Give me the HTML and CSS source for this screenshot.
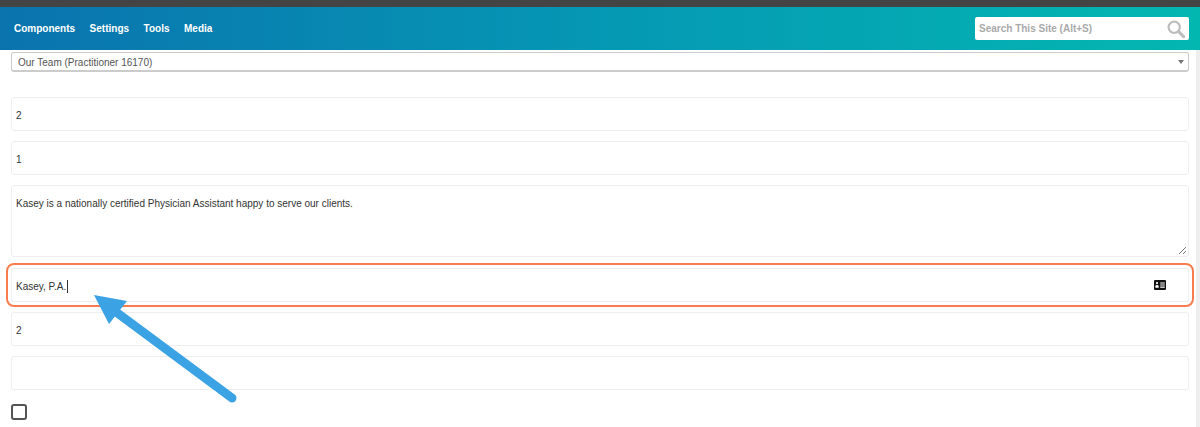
FILE: index.html
```html
<!DOCTYPE html>
<html lang="en">
<head>
    <meta charset="UTF-8">
    <meta name="viewport" content="width=device-width, initial-scale=1.0">
    <title>Edit Practitioner</title>
    <link rel="stylesheet" href="styles.css">
</head>
<body>
    <div class="top-strip"></div>
    <header class="nav-bar">
        <nav class="nav-links">
            <a href="#">Components</a>
            <a href="#">Settings</a>
            <a href="#">Tools</a>
            <a href="#">Media</a>
        </nav>
        <div class="search-box">
            <span class="search-text">Search This Site (Alt+S)</span>
            <svg class="search-icon" viewBox="0 0 18 18" width="18" height="18">
                <circle cx="7.2" cy="7.2" r="5.6" fill="none" stroke="#bdbdbd" stroke-width="2.2"/>
                <path d="M11.4 11.4L16.6 16.6" stroke="#bdbdbd" stroke-width="3" stroke-linecap="round"/>
            </svg>
        </div>
    </header>
    <main class="content">
        <div class="select-box">
            <span>Our Team (Practitioner 16170)</span>
            <span class="select-caret"></span>
        </div>
        <div class="field first-field">2</div>
        <div class="field">1</div>
        <div class="field text-area">
            Kasey is a nationally certified Physician Assistant happy to serve our clients.
            <svg class="resize-grip" viewBox="0 0 9 9" width="9" height="9">
                <path d="M1 8L8 1M5 8L8 5" stroke="#777" stroke-width="1"/>
            </svg>
        </div>
        <div class="field active-field">
            <span class="typed">Kasey, P.A.<span class="text-cursor"></span></span>
            <svg class="card-icon" viewBox="0 0 12 10" width="12" height="10">
                <path fill-rule="evenodd" fill="#111" d="M1 0H11A1 1 0 0 1 12 1V9A1 1 0 0 1 11 10H1A1 1 0 0 1 0 9V1A1 1 0 0 1 1 0ZM3 2A1 1 0 1 0 3 4.2A1 1 0 1 0 3 2ZM1.3 7.8H4.7V6.4Q4.7 5 3 5Q1.3 5 1.3 6.4ZM6.2 2.4V3.5H10.8V2.4ZM6.2 4.5V5.6H10.8V4.5ZM6.2 6.6V7.7H10.8V6.6Z"/>
            </svg>
        </div>
        <div class="field">2</div>
        <div class="field"></div>
        <div class="check-box"></div>
    </main>
    <div class="scroll-track"></div>
    <!-- annotation arrow -->
    <svg class="arrow" viewBox="0 0 1200 427" width="1200" height="427">
        <path d="M232 398L112 309" stroke="#3ba3e4" stroke-width="9" stroke-linecap="round"/>
        <path d="M94 295L127 301L109 324Z" fill="#3ba3e4"/>
    </svg>
</body>
</html>
```

FILE: styles.css
```css
html, body {
    height: 100%;
}
body {
    margin: 0;
    overflow: hidden;
    background-color: #fff;
    font-family: "Liberation Sans", Arial, sans-serif;
    font-size: 10px;
    color: #333;
}
.top-strip {
    height: 7px;
    background-color: #444;
}
.nav-bar {
    height: 43px;
    box-sizing: border-box;
    padding: 0 11px 0 14px;
    display: flex;
    justify-content: space-between;
    align-items: center;
    background: linear-gradient(90deg, #0a73ae 0%, #0598b4 50%, #03b7b1 100%);
}
.nav-links {
    display: flex;
    gap: 14.5px;
}
.nav-links a {
    color: #fff;
    font-weight: bold;
    font-size: 10px;
    text-decoration: none;
}
.search-box {
    width: 214px;
    height: 23px;
    box-sizing: border-box;
    margin-top: -1px;
    padding: 0 4px;
    display: flex;
    justify-content: space-between;
    align-items: center;
    background-color: #fff;
    border-radius: 2px;
}
.search-text {
    color: #aaa;
    font-weight: bold;
    font-size: 10px;
}
.search-icon {
    margin-top: 1px;
}
.content {
    padding: 2px 11px 0;
    width: 1178px;
    display: flex;
    flex-direction: column;
    gap: 10px;
}
.select-box {
    height: 20px;
    box-sizing: border-box;
    padding: 1px 6px 0;
    display: flex;
    justify-content: space-between;
    align-items: center;
    border: 1px solid #ccc;
    border-bottom-width: 2px;
    border-radius: 3px;
    color: #555;
}
.select-caret {
    width: 0;
    height: 0;
    margin-right: -2px;
    border-left: 3px solid transparent;
    border-right: 3px solid transparent;
    border-top: 4px solid #777;
}
.field {
    height: 34px;
    box-sizing: border-box;
    padding: 2px 4px 0;
    display: flex;
    align-items: center;
    border: 1px solid #eee;
    border-radius: 3px;
}
.first-field {
    margin-top: 15px;
}
.text-area {
    height: 72px;
    align-items: flex-start;
    padding-top: 12px;
    position: relative;
}
.resize-grip {
    position: absolute;
    right: 1px;
    bottom: 1px;
}
.active-field {
    margin-top: 1px;
    justify-content: space-between;
    padding-right: 22px;
    outline: 2px solid #f87c50;
    outline-offset: 3px;
}
.typed {
    display: flex;
    align-items: center;
}
.text-cursor {
    width: 1px;
    height: 13px;
    margin-left: 1px;
    background-color: #333;
}
.card-icon {
    margin-top: -3px;
}
.check-box {
    width: 16px;
    height: 16px;
    box-sizing: border-box;
    margin-top: 4px;
    border: 2px solid #555;
    border-radius: 3px;
}
.scroll-track {
    position: absolute;
    top: 50px;
    right: 0;
    bottom: 0;
    width: 4px;
    background-color: #eee;
}
.arrow {
    position: absolute;
    top: 0;
    left: 0;
}
```
